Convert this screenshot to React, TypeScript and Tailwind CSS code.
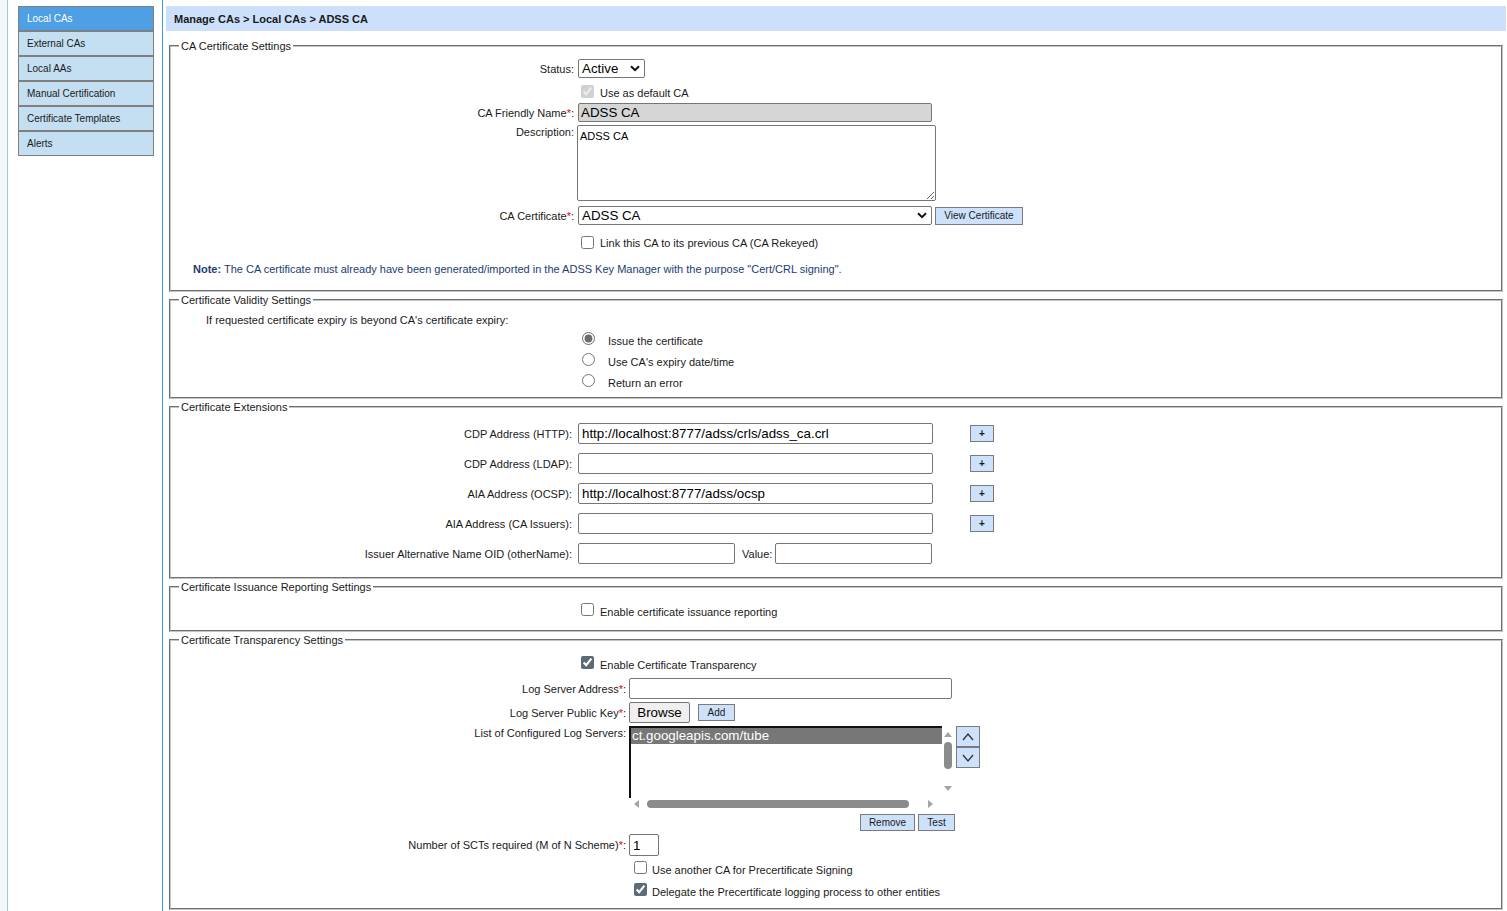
import React from 'react';

const navItems = ['Local CAs', 'External CAs', 'Local AAs', 'Manual Certification', 'Certificate Templates', 'Alerts'];

const extRows = [
  ['CDP Address (HTTP):', 'http://localhost:8777/adss/crls/adss_ca.crl'],
  ['CDP Address (LDAP):', ''],
  ['AIA Address (OCSP):', 'http://localhost:8777/adss/ocsp'],
  ['AIA Address (CA Issuers):', ''],
];

const expiryOptions = ['Issue the certificate', "Use CA's expiry date/time", 'Return an error'];

const Req = () => <span className="text-[#e00000]">*</span>;

const BlueButton: React.FC<{ children: React.ReactNode; className?: string }> = ({ children, className = '' }) => (
  <button className={`shrink-0 bg-[#cde1fb] border border-[#7b7b7b] text-[10px] leading-none text-[#1a1a1a] ${className}`}>
    {children}
  </button>
);

const Select: React.FC<{ value: string; className: string }> = ({ value, className }) => (
  <div className={`relative shrink-0 ${className}`}>
    <select
      defaultValue={value}
      className="appearance-none w-full h-full border border-[#767676] rounded-[2px] bg-white pl-[3px] text-[13.33px] leading-none text-black outline-none"
    >
      <option>{value}</option>
    </select>
    <svg width="10" height="7" viewBox="0 0 10 7" className="pointer-events-none absolute right-[5px] top-[6px]">
      <path d="M1 1.2l4 4 4-4" fill="none" stroke="#111" strokeWidth="2" />
    </svg>
  </div>
);

const Section: React.FC<{ title: string; className?: string; children: React.ReactNode }> = ({ title, className = '', children }) => (
  <fieldset className={`mx-[3px] border-2 [border-style:groove] border-[#c4c4c4] ${className}`}>
    <legend className="ml-[8px] px-[2px] text-[11px] leading-[14px]">{title}</legend>
    {children}
  </fieldset>
);

const textInput = 'shrink-0 h-[21px] border border-[#767676] rounded-[2px] bg-white px-[3px] text-[13.33px] text-black outline-none';

const Tri: React.FC<{ dir: 'up' | 'down' | 'left' | 'right' }> = ({ dir }) => {
  const pts = { up: '0,6 4,1 8,6', down: '0,1 4,6 8,1', left: '6,0 1,4 6,8', right: '1,0 6,4 1,8' }[dir];
  return (
    <svg width="8" height="8" viewBox="0 0 8 8">
      <polygon points={pts} fill="#a3a3a3" />
    </svg>
  );
};

export default function App() {
  return (
    <div className="flex w-full h-[911px] overflow-hidden bg-white font-['Liberation_Sans',Arial,sans-serif] text-[11px] leading-[14px] text-[#1a1a1a]">
      <div className="w-[7px] shrink-0 bg-[#f2f7fc]" />
      <aside className="w-[156px] shrink-0 border-l border-r border-l-[#9cc6ea] border-r-[#3b9ee2] pt-[6px] pl-[10px]">
        {navItems.map((n, i) => (
          <div
            key={n}
            className={`w-[136px] h-[25px] flex items-center pl-[8px] border border-[#808080] text-[10px] ${
              i === 0 ? 'bg-[#4e9fe3] text-white' : 'bg-[#c4dff1] text-[#1a1a1a]'
            }`}
          >
            {n}
          </div>
        ))}
      </aside>

      <main className="flex-1 pl-[3px] pr-[1px] pt-[6px]">
        <div className="h-[25px] bg-[#cce0fc] pl-[8px] flex items-center font-bold text-[11px]">
          Manage CAs &gt; Local CAs &gt; ADSS CA
        </div>

        <Section title="CA Certificate Settings" className="mt-[8px] pb-[14px]">
          <div className="flex items-center mt-[6px] h-[19px]">
            <div className="w-[403px] text-right">Status:</div>
            <Select value="Active" className="ml-[4px] w-[67px] h-[19px]" />
          </div>
          <div className="flex items-center mt-[3px] h-[20px] pl-[410px]">
            <input type="checkbox" checked disabled readOnly className="m-0 w-[13px] h-[13px]" />
            <span className="ml-[6px] pt-[4px]">Use as default CA</span>
          </div>
          <div className="flex items-center mt-[2px] h-[19px]">
            <div className="w-[403px] text-right">
              CA Friendly Name<Req />:
            </div>
            <input
              readOnly
              value="ADSS CA"
              className="ml-[4px] w-[354px] h-[19px] border border-[#767676] rounded-[2px] bg-[#d6d6d6] px-[2px] text-[13.33px] text-black outline-none"
            />
          </div>
          <div className="flex items-start mt-[3px]">
            <div className="w-[403px] text-right">Description:</div>
            <textarea
              defaultValue="ADSS CA"
              className="ml-[3px] w-[359px] h-[76px] border border-[#767676] rounded-[2px] bg-white px-[2px] pt-[3px] text-[11px] leading-[14px] text-black outline-none"
            />
          </div>
          <div className="flex items-center mt-[5px] h-[19px]">
            <div className="w-[403px] text-right">
              CA Certificate<Req />:
            </div>
            <Select value="ADSS CA" className="ml-[4px] w-[354px] h-[19px]" />
            <BlueButton className="ml-[3px] h-[18px] w-[88px]">View Certificate</BlueButton>
          </div>
          <div className="flex items-center mt-[7px] h-[20px] pl-[410px]">
            <input type="checkbox" className="m-0 w-[13px] h-[13px]" />
            <span className="ml-[6px] pt-[2px]">Link this CA to its previous CA (CA Rekeyed)</span>
          </div>
          <div className="mt-[10px] pl-[22px] text-[#1c3d6e]">
            <b>Note:</b> The CA certificate must already have been generated/imported in the ADSS Key Manager with the purpose
            "Cert/CRL signing".
          </div>
        </Section>

        <Section title="Certificate Validity Settings" className="mt-[1px] pb-[6px]">
          <div className="mt-[6px] pl-[35px]">If requested certificate expiry is beyond CA's certificate expiry:</div>
          <div className="mt-[1px] pl-[411px]">
            {expiryOptions.map((r, i) => (
              <div key={r} className="flex items-center h-[21px]">
                <input type="radio" name="expiry" defaultChecked={i === 0} className="m-0 w-[13px] h-[13px] accent-[#6d6d6d]" />
                <span className="ml-[13px] pt-[4px]">{r}</span>
              </div>
            ))}
          </div>
        </Section>

        <Section title="Certificate Extensions" className="mt-[1px] pb-[13px]">
          {extRows.map(([label, value]) => (
            <div key={label} className="flex items-center h-[21px] mt-[9px]">
              <div className="w-[401px] text-right">{label}</div>
              <input readOnly value={value} className={`${textInput} ml-[6px] w-[355px]`} />
              <BlueButton className="ml-[37px] w-[24px] h-[17px] font-bold">+</BlueButton>
            </div>
          ))}
          <div className="flex items-center mt-[9px] h-[21px]">
            <div className="w-[401px] text-right">Issuer Alternative Name OID (otherName):</div>
            <input readOnly value="" className={`${textInput} ml-[6px] w-[157px]`} />
            <span className="ml-[7px]">Value:</span>
            <input readOnly value="" className={`${textInput} ml-[3px] w-[157px]`} />
          </div>
        </Section>

        <Section title="Certificate Issuance Reporting Settings" className="mt-[1px] pb-[11px]">
          <div className="flex items-center mt-[5px] h-[20px] pl-[410px]">
            <input type="checkbox" className="m-0 w-[13px] h-[13px]" />
            <span className="ml-[6px] pt-[6px]">Enable certificate issuance reporting</span>
          </div>
        </Section>

        <Section title="Certificate Transparency Settings" className="mt-[1px] pb-[9px]">
          <div className="flex items-center mt-[5px] h-[20px] pl-[410px]">
            <input type="checkbox" defaultChecked className="m-0 w-[13px] h-[13px] accent-[#5d6a77]" />
            <span className="ml-[6px] pt-[6px]">Enable Certificate Transparency</span>
          </div>
          <div className="flex items-center mt-[6px] h-[21px]">
            <div className="w-[455px] text-right">
              Log Server Address<Req />:
            </div>
            <input readOnly value="" className={`${textInput} ml-[3px] w-[323px]`} />
          </div>
          <div className="flex items-center mt-[3px] h-[21px]">
            <div className="w-[455px] text-right">
              Log Server Public Key<Req />:
            </div>
            <button className="ml-[3px] w-[61px] h-[21px] bg-[#efefef] border border-[#767676] rounded-[2px] text-[13.33px] text-black">
              Browse
            </button>
            <BlueButton className="ml-[8px] w-[37px] h-[17px]">Add</BlueButton>
          </div>
          <div className="flex items-start mt-[3px]">
            <div className="w-[455px] text-right">List of Configured Log Servers:</div>
            <div className="ml-[3px] w-[325px] h-[84px] flex flex-col bg-white">
              <div className="flex h-[72px]">
                <div className="w-[313px] h-full border-t-2 border-l-2 border-[#111]">
                  <div className="h-[16px] bg-[#777777] text-white text-[13.33px] leading-[16px] pl-[1px]">
                    ct.googleapis.com/tube
                  </div>
                </div>
                <div className="w-[12px] h-full flex flex-col items-center pt-[5px] pb-[5px]">
                  <Tri dir="up" />
                  <div className="mt-[3px] w-[8px] h-[27px] rounded-full bg-[#8b8b8b]" />
                  <div className="flex-1" />
                  <Tri dir="down" />
                </div>
              </div>
              <div className="h-[12px] flex items-center pl-[4px] pr-[19px]">
                <Tri dir="left" />
                <div className="ml-[6px] w-[262px] h-[8px] rounded-full bg-[#8b8b8b]" />
                <div className="flex-1" />
                <Tri dir="right" />
              </div>
            </div>
            <div className="ml-[2px] flex flex-col">
              {['up', 'down'].map((d) => (
                <button
                  key={d}
                  className="w-[24px] h-[21px] bg-[#cde1fb] border border-[#7b7b7b] flex items-center justify-center"
                >
                  <svg width="14" height="10" viewBox="0 0 14 10">
                    <polyline
                      points={d === 'up' ? '2,8 7,2 12,8' : '2,2 7,8 12,2'}
                      fill="none"
                      stroke="#333"
                      strokeWidth="1.3"
                    />
                  </svg>
                </button>
              ))}
            </div>
          </div>
          <div className="flex items-center mt-[4px] h-[17px] pl-[689px]">
            <BlueButton className="w-[55px] h-[17px]">Remove</BlueButton>
            <BlueButton className="ml-[3px] w-[37px] h-[17px]">Test</BlueButton>
          </div>
          <div className="flex items-center mt-[3px] h-[22px]">
            <div className="w-[455px] text-right">
              Number of SCTs required (M of N Scheme)<Req />:
            </div>
            <input readOnly value="1" className={`${textInput} ml-[3px] w-[30px] h-[22px]`} />
          </div>
          <div className="flex items-center mt-[1px] h-[20px] pl-[463px]">
            <input type="checkbox" className="m-0 w-[13px] h-[13px]" />
            <span className="ml-[5px] pt-[6px]">Use another CA for Precertificate Signing</span>
          </div>
          <div className="flex items-center mt-[2px] h-[20px] pl-[463px]">
            <input type="checkbox" defaultChecked className="m-0 w-[13px] h-[13px] accent-[#5d6a77]" />
            <span className="ml-[5px] pt-[6px]">Delegate the Precertificate logging process to other entities</span>
          </div>
        </Section>
      </main>
    </div>
  );
}
